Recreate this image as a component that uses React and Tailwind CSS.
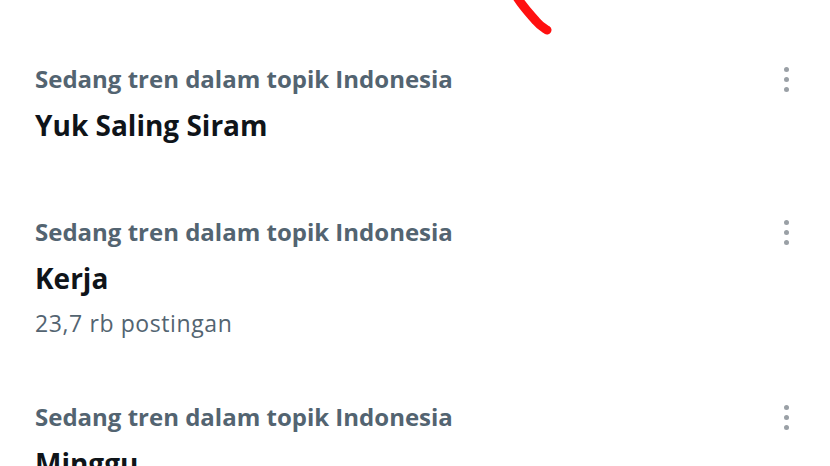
import React from "react";

const trends = [
    { title: "Yuk Saling Siram", pt: "pt-[63px]", pb: "pb-[71px]" },
    { title: "Kerja", count: "23,7 rb postingan", pb: "pb-[62px]" },
    { title: "Minggu" },
];

function Dots() {
    return (
        <div className="flex flex-col items-center gap-[5px] pt-[4px]">
            <span className="h-[5px] w-[5px] rounded-full bg-[#9aa0a6]" />
            <span className="h-[5px] w-[5px] rounded-full bg-[#9aa0a6]" />
            <span className="h-[5px] w-[5px] rounded-full bg-[#9aa0a6]" />
        </div>
    );
}

export default function App() {
    return (
        <div
            className="relative h-[466px] w-[830px] overflow-hidden bg-white"
            style={{ fontFamily: "'Open Sans', Roboto, sans-serif" }}
        >
            {trends.map(({ title, count, pt, pb }) => (
                <div key={title} className={`flex justify-between pl-[35px] pr-[41px] ${pt || ""} ${pb || ""}`}>
                    <div>
                        <p className="text-[24px] font-bold leading-[32px] text-[#536471]">
                            Sedang tren dalam topik Indonesia
                        </p>
                        <h3 className="mt-[10px] text-[28px] font-bold leading-[40px] text-[#0f1419]">
                            {title}
                        </h3>
                        {count && (
                            <p className="mt-[9px] text-[23px] leading-[32px] tracking-[0.6px] text-[#536471]">
                                {count}
                            </p>
                        )}
                    </div>
                    <Dots />
                </div>
            ))}

            <svg className="absolute left-[505px] top-0" width="60" height="45" viewBox="0 0 60 45">
                <path
                    d="M10 -6 C17 6 25 14 31 21 C35 26 39 28 42 30"
                    fill="none"
                    stroke="#ff1010"
                    strokeWidth="9"
                    strokeLinecap="round"
                />
            </svg>
        </div>
    );
}
